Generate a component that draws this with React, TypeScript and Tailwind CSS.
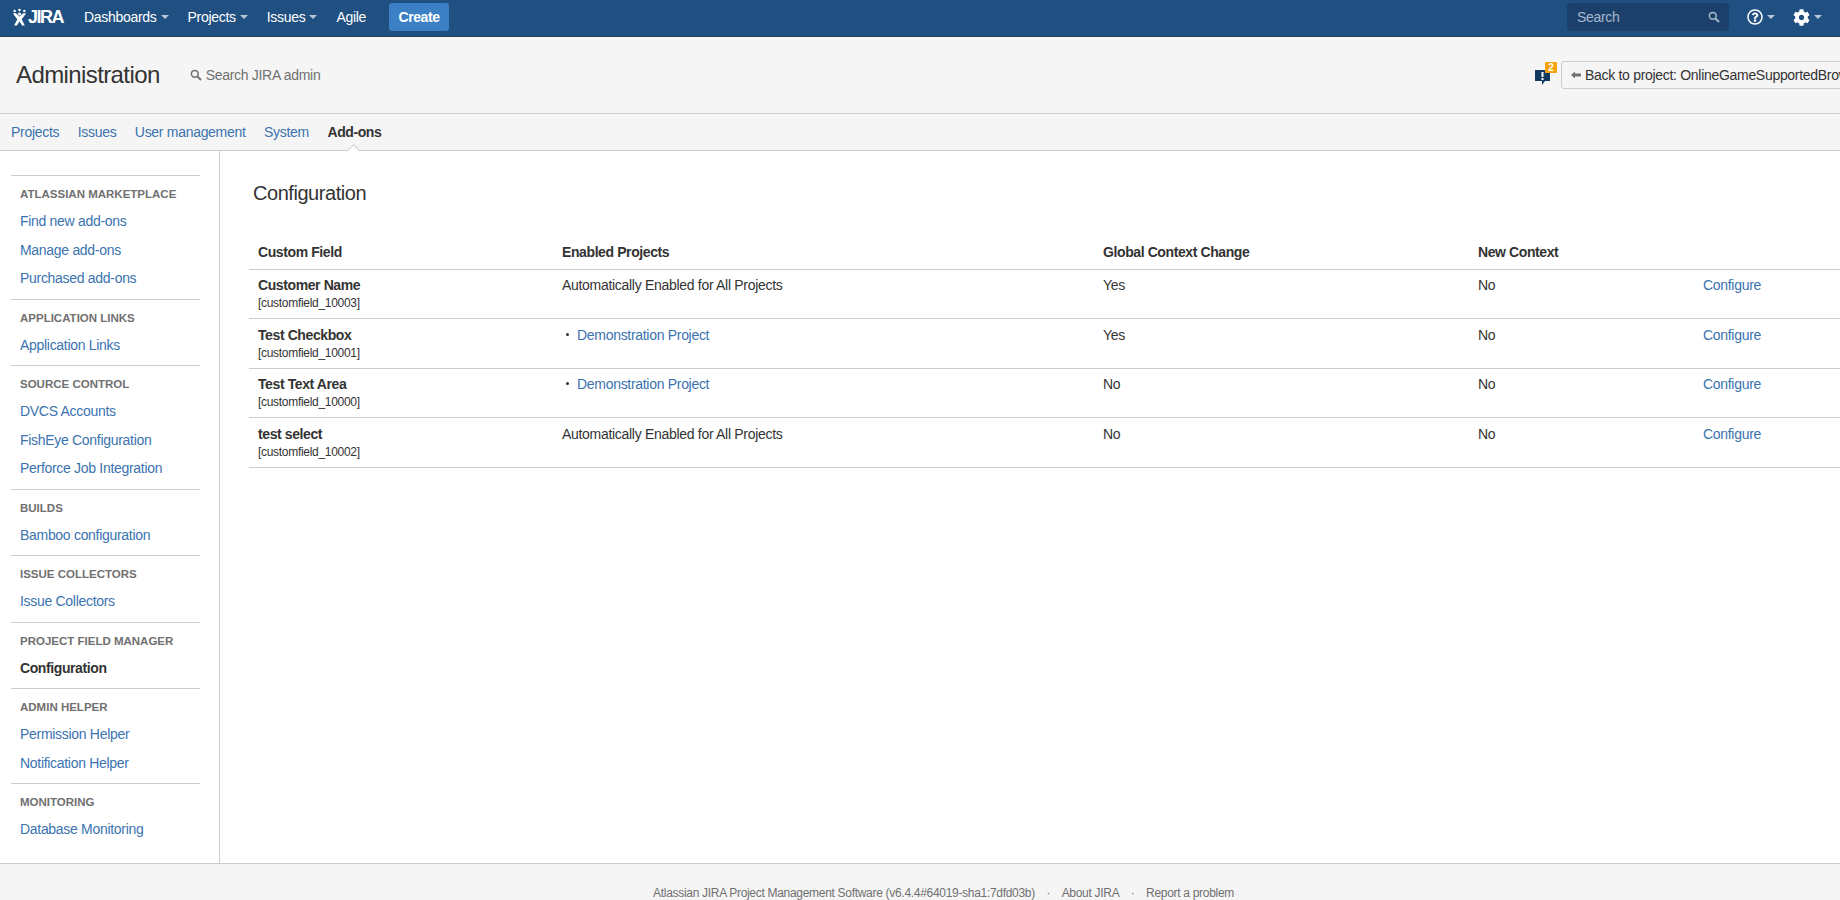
import React from "react";
import { FaCog, FaRegQuestionCircle } from "react-icons/fa";

const sideGroups = [
  { title: "Atlassian Marketplace", links: ["Find new add-ons", "Manage add-ons", "Purchased add-ons"] },
  { title: "Application Links", links: ["Application Links"] },
  { title: "Source Control", links: ["DVCS Accounts", "FishEye Configuration", "Perforce Job Integration"] },
  { title: "Builds", links: ["Bamboo configuration"] },
  { title: "Issue Collectors", links: ["Issue Collectors"] },
  { title: "Project Field Manager", links: ["Configuration"], active: true },
  { title: "Admin Helper", links: ["Permission Helper", "Notification Helper"] },
  { title: "Monitoring", links: ["Database Monitoring"] },
];

const rows = [
  { name: "Customer Name", id: "customfield_10003", project: null, global: "Yes", height: "h-[49px]", pad: "pt-[5px]" },
  { name: "Test Checkbox", id: "customfield_10001", project: "Demonstration Project", global: "Yes", height: "h-[50px]", pad: "pt-[6px]" },
  { name: "Test Text Area", id: "customfield_10000", project: "Demonstration Project", global: "No", height: "h-[49px]", pad: "pt-[5px]" },
  { name: "test select", id: "customfield_10002", project: null, global: "No", height: "h-[50px]", pad: "pt-[6px]" },
];

const Caret = () => (
  <span className="ml-[4px] inline-block h-0 w-0 border-x-[4px] border-t-[4px] border-x-transparent border-t-[#b9c8d9]" />
);

const SearchIcon = ({ color }: { color: string }) => (
  <svg width="12" height="12" viewBox="0 0 12 12" fill="none" stroke={color} className="shrink-0">
    <circle cx="4.8" cy="4.8" r="3.4" strokeWidth="1.5" />
    <path d="M7.4 7.4L11 11" strokeWidth="2" />
  </svg>
);

const Logo = () => (
  <div className="flex items-center text-white">
    <svg width="15" height="19" viewBox="0 0 17 20" fill="white">
      <circle cx="3" cy="2.5" r="1.4" />
      <circle cx="8.5" cy="1.4" r="1.4" />
      <circle cx="14" cy="2.5" r="1.4" />
      <circle cx="8.5" cy="6" r="1.7" />
      <path d="M1 5.5L4 4.8L8.5 9L13 4.8L16 5.5L11 12L14.5 19H11.5L8.5 14.5L5.5 19H2.5L6 12Z" />
    </svg>
    <span className="ml-[1px] text-[18px] leading-none font-bold tracking-[-1.5px]">JIRA</span>
  </div>
);

const App = () => {
  return (
    <div className="flex h-screen flex-col overflow-hidden bg-white font-['Liberation_Sans',Arial,sans-serif] text-sm tracking-[-0.3px] text-[#333333]">
      {/* Top bar */}
      <header className="flex h-[37px] shrink-0 items-center border-b border-[#2e3d54] bg-[#205081] pb-[2px] pl-[12px] text-white">
        <Logo />
        <nav className="ml-[21px] flex items-center gap-[19px]">
          <span className="flex items-center">Dashboards<Caret /></span>
          <span className="flex items-center">Projects<Caret /></span>
          <span className="flex items-center">Issues<Caret /></span>
          <span>Agile</span>
        </nav>
        <button className="ml-[23px] h-[28px] w-[60px] rounded-[3px] bg-[#3b7fc4] font-bold tracking-[-0.4px] text-white">Create</button>
        <div className="ml-auto flex h-[28px] w-[162px] items-center justify-between rounded-[3px] bg-[#1b406b] pr-[9px] pl-[10px] text-[#a6b9ce]">
          Search
          <SearchIcon color="#a6b9ce" />
        </div>
        <div className="mr-[18px] ml-[18px] flex items-center">
          <FaRegQuestionCircle className="text-[16px]" />
          <Caret />
          <FaCog className="ml-[18px] text-[17px]" />
          <Caret />
        </div>
      </header>

      {/* Administration header */}
      <div className="flex h-[76px] shrink-0 items-center bg-[#f5f5f5] pl-[16px]">
        <h1 className="text-2xl leading-[30px] font-normal tracking-[-0.6px]">Administration</h1>
        <div className="ml-[30px] flex items-center text-[#707070]">
          <SearchIcon color="#707070" />
          <span className="ml-[4px]">Search JIRA admin</span>
        </div>
        <div className="ml-auto flex items-center">
          <div className="relative mt-[2px] h-[20px] w-[22px]">
            <svg width="17" height="18" viewBox="0 0 17 18" className="absolute top-[3px] left-0">
              <path d="M0 1H15V12H10L7 16V12H0Z" fill="#12395f" />
              <rect x="6.5" y="3" width="2" height="5" fill="white" />
              <rect x="6.5" y="9" width="2" height="2" fill="white" />
            </svg>
            <span className="absolute -top-[4px] left-[10px] flex h-[11px] w-[12px] items-center justify-center rounded-[1px] bg-[#f6a30d] text-[10px] leading-none font-bold text-white">
              2
            </span>
          </div>
          <div className="ml-[4px] -mr-[21px] flex h-[28px] w-[300px] shrink-0 items-center rounded-[3px] border border-[#cccccc] pl-[9px] whitespace-nowrap">
            <svg width="10" height="8" viewBox="0 0 10 8" fill="#707070" className="shrink-0">
              <path d="M0 4L4 0.5V2.5H10V5.5H4V7.5Z" />
            </svg>
            <span className="ml-[4px]">Back to project: OnlineGameSupportedBrowser</span>
          </div>
        </div>
      </div>

      {/* Admin tabs */}
      <nav className="relative flex h-[38px] shrink-0 items-center gap-[18.5px] border-y border-[#cccccc] bg-[#f5f5f5] pl-[11px] text-[#3b73af]">
        <span>Projects</span>
        <span>Issues</span>
        <span>User management</span>
        <span>System</span>
        <span className="font-bold tracking-[-0.4px] text-[#333333]">Add-ons</span>
        <span className="absolute -bottom-[5px] left-[349px] h-[9px] w-[9px] rotate-45 border-t border-l border-[#cccccc] bg-white" />
      </nav>

      <div className="flex min-h-0 flex-1">
        {/* Sidebar */}
        <aside className="w-[220px] shrink-0 border-r border-[#cccccc] pt-[24px] pr-[19px] pl-[11px]">
          {sideGroups.map((group, index) => (
            <div key={index} className="border-t border-[#cccccc] pt-[10px] pb-[6px] pl-[9px]">
              <h3 className="mb-[5px] h-[16px] text-[11.5px] leading-[16px] font-bold tracking-normal text-[#707070] uppercase">
                {group.title}
              </h3>
              {group.links.map((link) => (
                <div
                  key={link}
                  className={
                    group.active
                      ? "flex h-[28.5px] items-center font-bold tracking-[-0.4px] text-[#333333]"
                      : "flex h-[28.5px] items-center text-[#3b73af]"
                  }
                >
                  {link}
                </div>
              ))}
            </div>
          ))}
        </aside>

        {/* Main content */}
        <main className="min-w-0 flex-1 pt-[29px] pl-[29px]">
          <h2 className="ml-[4px] h-[26px] text-xl leading-[26px] font-normal tracking-[-0.45px]">Configuration</h2>
          <table className="mt-[29px] w-full table-fixed border-collapse text-left">
            <colgroup>
              <col className="w-[304px]" />
              <col className="w-[541px]" />
              <col className="w-[375px]" />
              <col className="w-[225px]" />
              <col />
            </colgroup>
            <thead>
              <tr className="h-[34px] border-b border-[#cccccc] tracking-[-0.4px]">
                <th className="px-[9px] pt-[1px] font-bold">Custom Field</th>
                <th className="px-[9px] pt-[1px] font-bold">Enabled Projects</th>
                <th className="px-[9px] pt-[1px] font-bold">Global Context Change</th>
                <th className="px-[9px] pt-[1px] font-bold">New Context</th>
                <th />
              </tr>
            </thead>
            <tbody>
              {rows.map((row) => (
                <tr key={row.id} className={`${row.height} border-b border-[#cccccc] align-top`}>
                  <td className={`px-[9px] ${row.pad}`}>
                    <div className="leading-[20px] font-bold tracking-[-0.4px]">{row.name}</div>
                    <div className="text-xs leading-[16px]">[{row.id}]</div>
                  </td>
                  <td className={`px-[9px] leading-[20px] ${row.pad}`}>
                    {row.project ? (
                      <div className="flex items-center">
                        <span className="ml-[4px] h-[3px] w-[3px] rounded-full bg-[#333333]" />
                        <span className="ml-[8px] text-[#3b73af]">{row.project}</span>
                      </div>
                    ) : (
                      "Automatically Enabled for All Projects"
                    )}
                  </td>
                  <td className={`px-[9px] leading-[20px] ${row.pad}`}>{row.global}</td>
                  <td className={`px-[9px] leading-[20px] ${row.pad}`}>No</td>
                  <td className={`px-[9px] leading-[20px] text-[#3b73af] ${row.pad}`}>Configure</td>
                </tr>
              ))}
            </tbody>
          </table>
        </main>
      </div>

      {/* Footer */}
      <footer className="flex h-[37px] shrink-0 items-start justify-center border-t border-[#cccccc] bg-[#f5f5f5] pt-[21px] pl-[47px] text-xs leading-[16px] text-[#707070]">
        <span>Atlassian JIRA Project Management Software (v6.4.4#64019-sha1:7dfd03b)</span>
        <span className="mx-[11.5px]">·</span>
        <span>About JIRA</span>
        <span className="mx-[11.5px]">·</span>
        <span>Report a problem</span>
      </footer>
    </div>
  );
};

export default App;
